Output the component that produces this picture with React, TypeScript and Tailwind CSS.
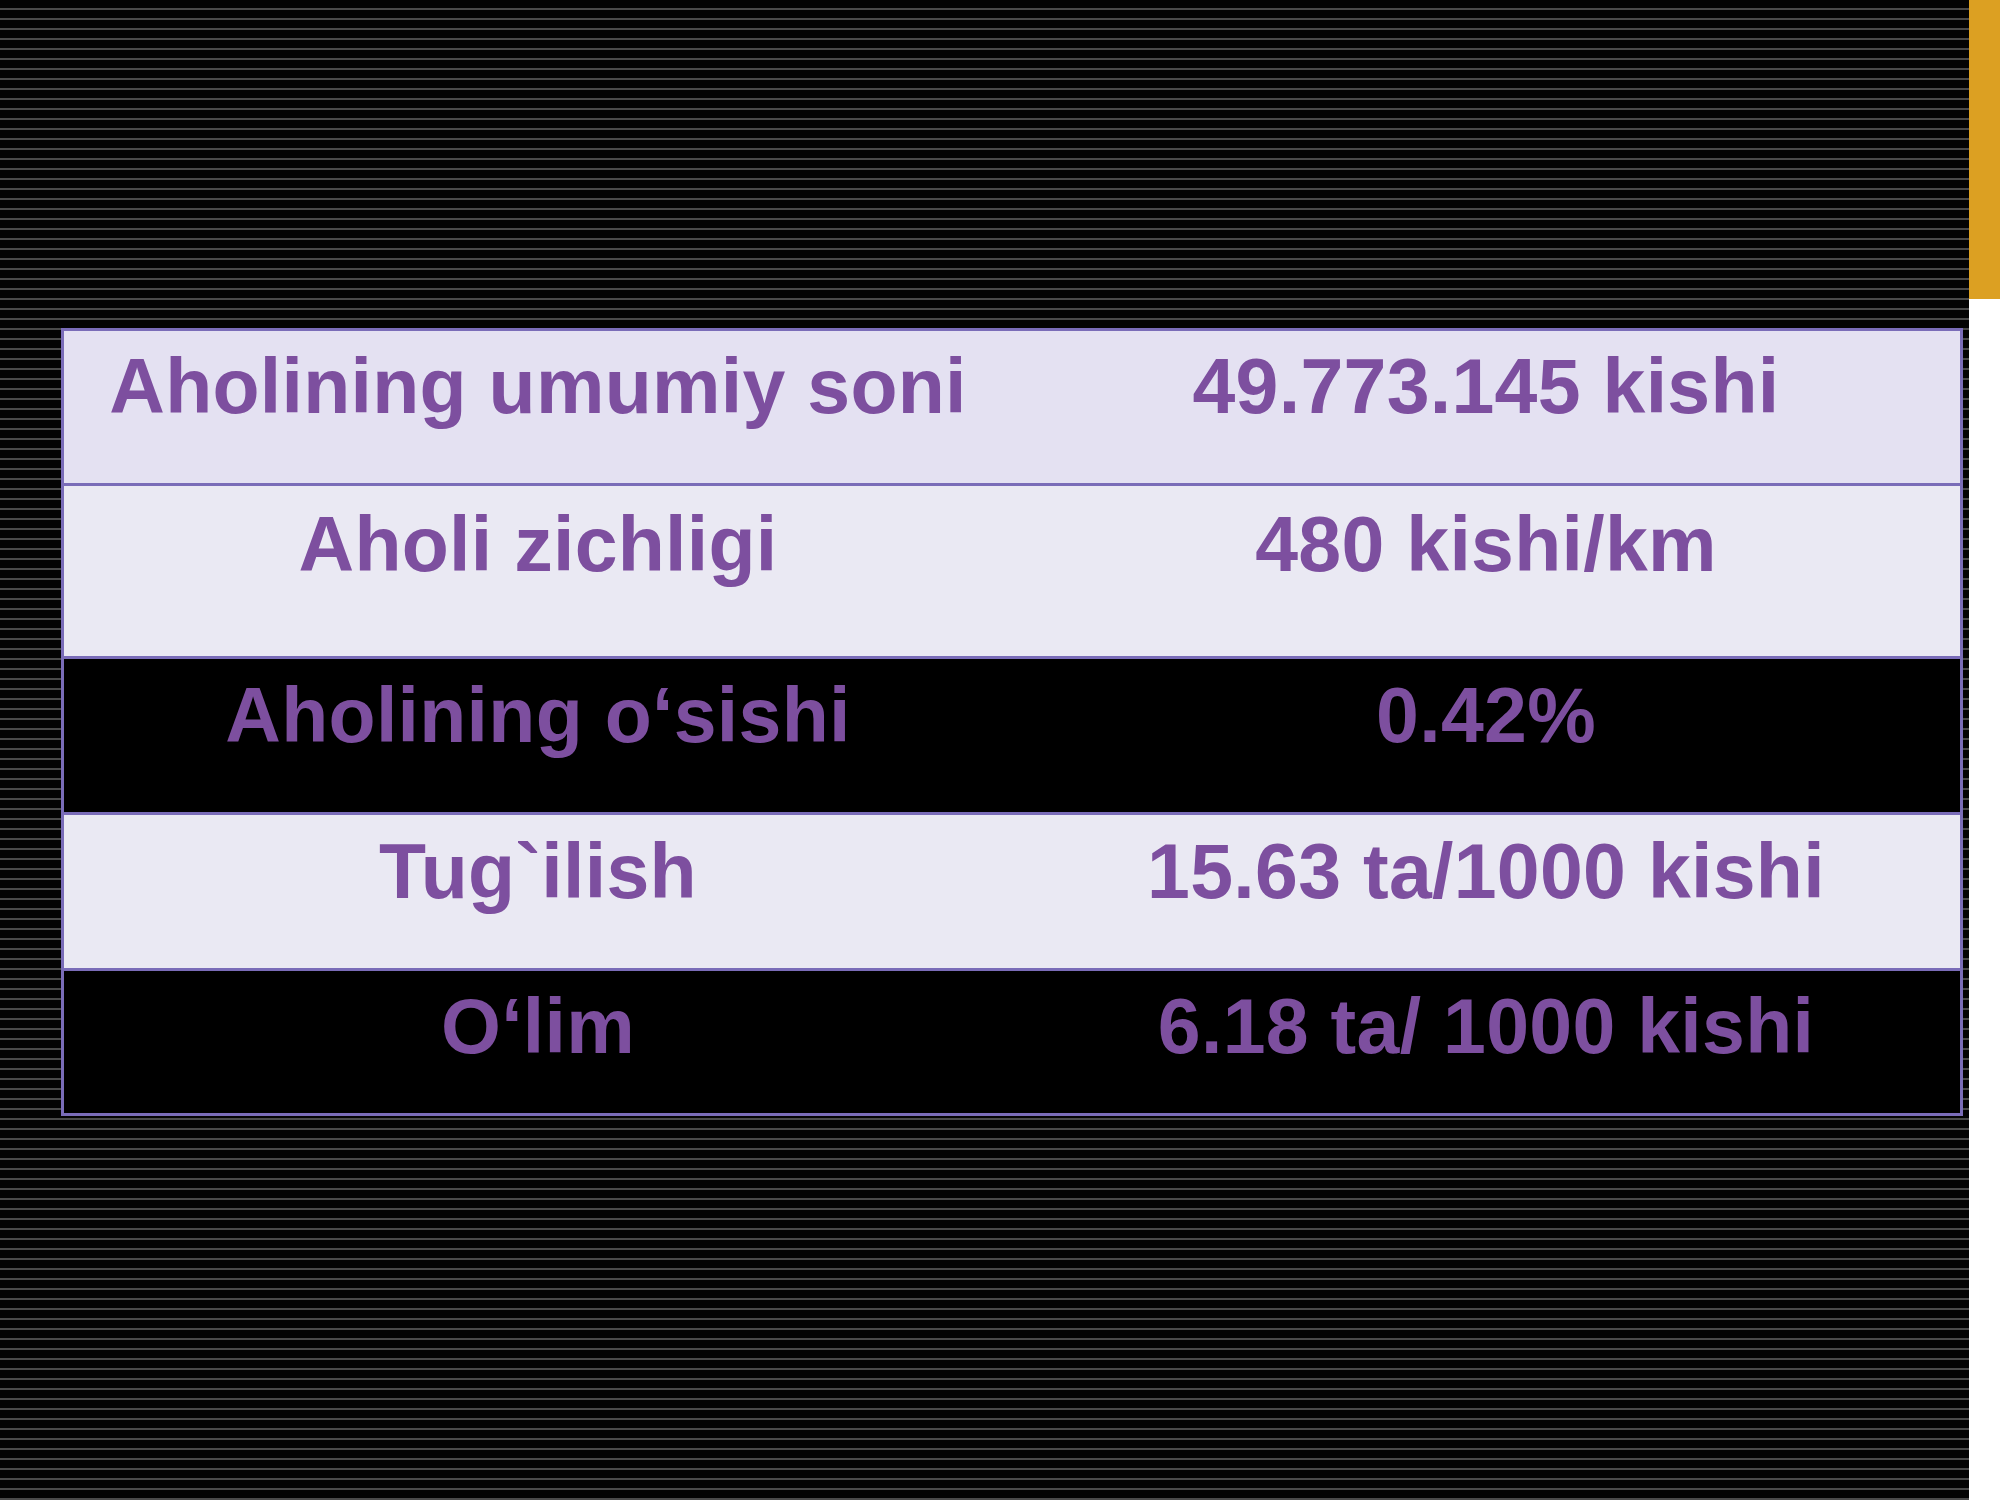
import React from 'react';

interface StatRow {
  label: string;
  value: string;
  dark?: boolean;
  bg?: string;
  height: string;
  pad: string;
}

// heights include the 3px divider on top of rows 2-5
const rows: StatRow[] = [
  { label: 'Aholining umumiy soni', value: '49.773.145 kishi', bg: 'bg-[#e4e1f2]', height: 'h-[152px]', pad: 'pt-[17px]' },
  { label: 'Aholi zichligi', value: '480 kishi/km', bg: 'bg-[#eae9f3]', height: 'h-[173px]', pad: 'pt-[20px]' },
  { label: 'Aholining o‘sishi', value: '0.42%', dark: true, height: 'h-[156px]', pad: 'pt-[18px]' },
  { label: 'Tug`ilish', value: '15.63 ta/1000 kishi', bg: 'bg-[#eae9f3]', height: 'h-[156px]', pad: 'pt-[18px]' },
  { label: 'O‘lim', value: '6.18 ta/ 1000 kishi', dark: true, height: 'h-[145px]', pad: 'pt-[17px]' },
];

const App: React.FC = () => {
  return (
    <div className="flex w-[2000px] h-[1500px] overflow-hidden">
      {/* striped slide background */}
      <div className="w-[1969px] h-full bg-[repeating-linear-gradient(to_bottom,#030303_0px,#030303_8px,#4a4a4a_8px,#4a4a4a_10px)] pt-[328px] pl-[61px]">
        <div className="w-[1902px] border-[3px] border-[#7a6cb8] bg-black">
          {rows.map((row, i) => (
            <div
              key={row.label}
              className={`grid grid-cols-2 ${row.height} ${row.pad} ${i > 0 ? 'border-t-[3px] border-[#7a6cb8]' : ''} ${row.dark ? 'bg-black' : row.bg}`}
            >
              <div className="text-center text-[77px] leading-[77px] font-bold tracking-[0.3px] text-[#7d4f9f] font-['Liberation_Sans',Arial,sans-serif] whitespace-nowrap">
                {row.label}
              </div>
              <div className="text-center text-[77px] leading-[77px] font-bold tracking-[0.3px] text-[#7d4f9f] font-['Liberation_Sans',Arial,sans-serif] whitespace-nowrap">
                {row.value}
              </div>
            </div>
          ))}
        </div>
      </div>

      {/* right edge accent */}
      <div className="flex-1 flex flex-col bg-white">
        <div className="h-[299px] bg-[#dca022]" />
      </div>
    </div>
  );
};

export default App;
